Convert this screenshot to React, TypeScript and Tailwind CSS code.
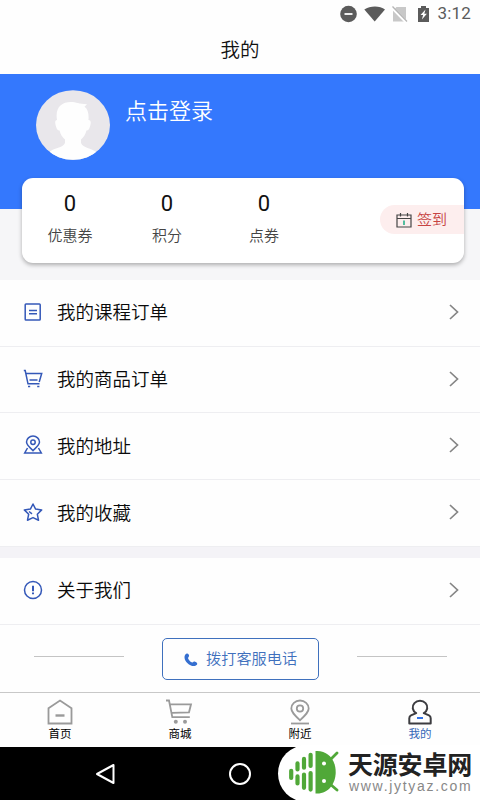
import type { ReactNode } from "react";

type MenuItem = {
  label: string;
  icon: ReactNode;
};

type TabItem = {
  label: string;
  icon: ReactNode;
  active?: boolean;
};

const STATS = [
  { label: "优惠券", value: 0 },
  { label: "积分", value: 0 },
  { label: "点券", value: 0 },
];

const lineIcon = "mb-[2px] h-5 w-5 fill-none stroke-[#3458b8] stroke-[1.5]";

const MENU: MenuItem[] = [
  {
    label: "我的课程订单",
    icon: (
      <svg viewBox="0 0 20 20" className={lineIcon}>
        <rect x="2.2" y="2" width="15" height="16" rx="0.8" />
        <path d="M6 8.5h8M6 11.8h8" />
      </svg>
    ),
  },
  {
    label: "我的商品订单",
    icon: (
      <svg viewBox="0 0 20 20" className={lineIcon}>
        <path d="M0.8 1.5h1.4l2.8 13.3h11.5M2.9 4.5h15.8l-2.5 8.5M6.5 11h8" />
        <path d="M5 17.5h2.2M14.2 17.5h2.2" />
      </svg>
    ),
  },
  {
    label: "我的地址",
    icon: (
      <svg viewBox="0 0 20 20" className={lineIcon}>
        <path d="M10 15.6C6.5 12.3 3.5 9.8 3.5 7a6.5 5.9 0 0 1 13 0C16.5 9.8 13.5 12.3 10 15.6Z" />
        <circle cx="10" cy="7.2" r="2.2" />
        <path d="M4.5 13 1.7 18h16.6L15.5 13" />
      </svg>
    ),
  },
  {
    label: "我的收藏",
    icon: (
      <svg viewBox="0 0 20 20" className={lineIcon} strokeLinejoin="round">
        <path d="M10 2l2.6 5.1 6.1.8-4.4 4.3 1.2 6-5.5-2.6-5.5 2.6 1.2-6-4.4-4.3 6.1-.8Z" />
        <path d="M6 9.5l3 2.3" />
      </svg>
    ),
  },
];

const ABOUT: MenuItem = {
  label: "关于我们",
  icon: (
    <svg viewBox="0 0 20 20" className={lineIcon}>
      <circle cx="10" cy="10" r="8.5" />
      <path d="M10 5.7v5.6M10 12.6v1.7" strokeWidth="2" />
    </svg>
  ),
};

const TABS: TabItem[] = [
  {
    label: "首页",
    icon: (
      <svg viewBox="0 0 28 28" className="h-7 w-7 fill-none stroke-[#9a9a9a] stroke-[1.8]">
        <path d="M2.5 10.2 14 2.5l11.5 7.7v15.3h-23Z" />
        <path d="M9.5 17.5h9" strokeWidth="2.4" />
      </svg>
    ),
  },
  {
    label: "商城",
    icon: (
      <svg viewBox="0 0 28 28" className="h-7 w-7 fill-none stroke-[#9a9a9a] stroke-[1.8]">
        <path d="M0 2.5h3L6.3 19.2h17.5M4 6.3h21l-2 8-17 .6" />
        <circle cx="9.8" cy="23.8" r="2" className="fill-[#9a9a9a] stroke-none" />
        <circle cx="19" cy="23.8" r="2" className="fill-[#9a9a9a] stroke-none" />
      </svg>
    ),
  },
  {
    label: "附近",
    icon: (
      <svg viewBox="0 0 28 28" className="h-7 w-7 fill-none stroke-[#9a9a9a] stroke-[1.8]">
        <path d="M14 22.3C8.5 17 5.3 14 5.3 10.5a8.7 8 0 0 1 17.4 0c0 3.5-3.2 6.500-8.700 11.800Z" />
        <circle cx="14" cy="10.5" r="3.2" />
        <path d="M5 25.5h18" />
      </svg>
    ),
  },
  {
    label: "我的",
    active: true,
    icon: (
      <svg viewBox="0 0 28 28" className="h-7 w-7 fill-none stroke-[#3c3c40] stroke-[2]" strokeLinejoin="round">
        <path d="M10.2 15.2A7.3 6.7 0 1 1 17.8 15.2L23 17.4c1.3.6 1.7 1.5 1.7 2.8v5.3H3.3v-5.3c0-1.3.4-2.2 1.7-2.8Z" />
        <path d="M11 20h6" className="stroke-[#3373e8]" />
      </svg>
    ),
  },
];

const StatusBar = () => (
  <div className="flex h-[27px] items-center justify-end pr-[9px]">
    <svg viewBox="0 0 92 18" className="h-[18px] w-[92px] fill-[#5b5b5b]">
      <circle cx="9.5" cy="9" r="8.3" />
      <path d="M5.5 9h8" stroke="white" strokeWidth="1.8" />
      <path d="M25.3 4.6C31 .4 41 .4 46 4.6L35.7 16.4Z" />
      <path d="M57.5 2H67v14.5H54V5.5Z" className="fill-[#c8c8c8]" />
      <path d="M53 2.5l14.5 14.8" stroke="white" strokeWidth="3.2" />
      <path d="M53.5 1.5l14.5 15" stroke="#b5b5b5" strokeWidth="1.3" />
      <path d="M79 3h3V1h5v2h3v14H79Z" />
      <path d="M86.5 4.5 81.5 10h2.6l-1.2 4.5 5-5.8h-2.6Z" fill="white" />
    </svg>
    <span className="ml-[6px] text-[17px] leading-[27px] tracking-[0.2px] text-[#5b5b5b]">3:12</span>
  </div>
);

const MenuRow = ({ item }: { item: MenuItem }) => (
  <div className="flex h-[66.7px] items-center border-b border-[#eeeef1] pr-[20px] pl-[23px]">
    {item.icon}
    <span className="ml-[14px] flex-1 pt-[3px] text-[18.5px] font-[350] text-[#0a0a0a]">{item.label}</span>
    <svg viewBox="0 0 12 18" className="mb-[2px] h-[18px] w-3 fill-none stroke-[#858585] stroke-[1.7]">
      <path d="M2 2l7.5 7L2 16" />
    </svg>
  </div>
);

const Watermark = () => (
  <div className="absolute top-[745px] right-0 flex h-[57px] w-[202px] rounded-l-full bg-white pl-[10px]">
    <svg viewBox="0 0 54 48" className="mt-[4px] h-[48px] w-[54px] shrink-0 stroke-[#50a838]" fill="none" strokeLinecap="round">
      <path
        d="M3.2 21.8v7.1M9.5 14.4v6.1M9.5 27.4v7M16 9.9v8.8M16 25.6v13.2M22.6 5.8v11.2M22.6 24v16.6"
        strokeWidth="4.2"
      />
      <path d="M27.5 2C40 1 47.7 11 47.7 23S40 45.5 27.5 44.5Z" className="fill-[#50a838] stroke-none" />
      <path d="M42 11l7-7M42 35l7 6" strokeWidth="2.8" />
      <circle cx="36" cy="14.5" r="2" className="fill-white stroke-none" />
      <circle cx="36" cy="32" r="2" className="fill-white stroke-none" />
    </svg>
    <div className="ml-[6px] whitespace-nowrap">
      <div className="mt-[8px] h-[27px] text-[25px] leading-[26px] font-bold tracking-[-0.2px] text-[#222]">天源安卓网</div>
      <div className="pl-px font-['Liberation_Sans'] text-[14px] leading-[13px] tracking-[1.7px] text-[#888]">www.jytyaz.com</div>
    </div>
  </div>
);

const App = () => {
  return (
    <div className="relative h-[800px] w-[480px] overflow-hidden bg-[#fefefe] font-[Roboto,'Noto_Sans_CJK_SC',sans-serif]">
      <header className="h-[74px]">
        <StatusBar />
        <h1 className="pt-px text-center text-[19.5px] leading-[45px] font-[350] text-[#111]">我的</h1>
      </header>

      <section className="h-[206px] bg-[#f6f6f8]">
        <div className="flex h-[135px] bg-[#3478fd] pt-[16px] pl-[36px]">
          <svg viewBox="0 0 74 70" className="h-[70px] w-[74px]">
            <defs>
              <clipPath id="avatar">
                <ellipse cx="37" cy="35" rx="37" ry="34.8" />
              </clipPath>
            </defs>
            <g clipPath="url(#avatar)">
              <rect width="74" height="70" fill="#e9e7eb" />
              <path
                fill="#fefefe"
                d="M21 30C19 18 25 12 35 12c5 0 8 2 16 2.2l-2.5 2.5C52 19 53 24 52.5 30c3 0 2.5 4 1.5 6.5-.8 2.5-1.5 4-3.5 4-1 4-3 7-5.5 9v3.5c2 5 10 5 16 9.5V71H14v-9.5C20 57 27 58 29 53v-3.5c-2.5-2-4.5-5-5.5-9-2 0-2.7-1.5-3.5-4-1-2.5-1.5-6.5 1-6.5Z"
              />
            </g>
          </svg>
          <span className="ml-[15px] pt-[6px] text-[22px] leading-[32px] font-[350] text-white">点击登录</span>
        </div>

        <div className="relative -mt-[31px] ml-[22px] flex h-[85px] w-[442px] overflow-hidden rounded-[11px] bg-white shadow-[0_2px_4px_rgba(0,0,0,0.3)]">
          {STATS.map((stat) => (
            <div key={stat.label} className="w-[97px] pr-px text-center">
              <div className="mt-[12px] text-[22px] leading-[28px] text-[#111]">{stat.value}</div>
              <div className="mt-[7px] text-[15px] leading-[22px] font-[350] text-[#444]">{stat.label}</div>
            </div>
          ))}
          <button className="mt-[27px] ml-auto flex h-[29px] w-[84px] items-center rounded-l-full bg-[#fdeeee] pl-[16px]">
            <svg viewBox="0 0 16 16" className="h-4 w-4 fill-none stroke-[#444] stroke-[1.2]">
              <path d="M1 3h14v12H1ZM1 6.5h14M4.5 1v3.5M11.5 1v3.5" />
              <path d="M8 8.5v4.5" className="stroke-[#28b18b]" strokeWidth="1.6" />
            </svg>
            <span className="ml-[5px] text-[15px] leading-[28px] font-[350] text-[#c74343]">签到</span>
          </button>
        </div>
      </section>

      <nav>
        {MENU.map((item) => (
          <MenuRow key={item.label} item={item} />
        ))}
        <div className="h-[11.2px] bg-[#f4f3f7]" />
        <MenuRow item={ABOUT} />
      </nav>

      <div className="flex h-[67.3px] items-center justify-between pr-[33px] pl-[34px]">
        <span className="mb-[3px] h-px w-[90px] bg-[#c4c4c4]" />
        <button className="mt-[2px] flex h-[42px] w-[157px] items-center rounded-[5px] border border-[#3f70bd] pl-[21px]">
          <svg viewBox="0 0 14 14" className="mt-[2px] h-[14px] w-[14px] fill-[#356fd0]">
            <path d="M2.3.8C3.600-.1 4.700 1 5 2.300c.3 1.500-.9 1.800-.9 2.700 0 1.600 2.700 4.400 4.300 4.400.9 0 1.200-1.100 2.600-.7 1.600.5 2.900 1.700 1.900 3.100-3.900 4-12.700-2.100-12.400-7.900.1-1.400.8-2.400 1.800-3.100Z" />
          </svg>
          <span className="ml-[8px] text-[15.2px] leading-[22px] font-[350] text-[#3f70bd]">拨打客服电话</span>
        </button>
        <span className="mb-[3px] h-px w-[90px] bg-[#c4c4c4]" />
      </div>

      <footer className="grid h-[55px] grid-cols-4 border-t border-[#c8c8c8]">
        {TABS.map((tab) => (
          <div key={tab.label} className="flex flex-col items-center pt-[5px]">
            {tab.icon}
            <span className={tab.active ? "text-[11.5px] leading-[17px] text-[#3568b8]" : "text-[11.5px] leading-[17px] text-black"}>
              {tab.label}
            </span>
          </div>
        ))}
      </footer>

      <div className="flex h-[53px] items-center bg-black pt-px pl-[94px]">
        <svg viewBox="0 0 22 22" className="h-[22px] w-[22px] fill-none stroke-white stroke-[2]" strokeLinejoin="round">
          <path d="M19.5 2v18L3 11Z" />
        </svg>
        <span className="ml-[113px] h-[22px] w-[22px] rounded-full border-2 border-white" />
      </div>

      <Watermark />
    </div>
  );
};

export default App;
